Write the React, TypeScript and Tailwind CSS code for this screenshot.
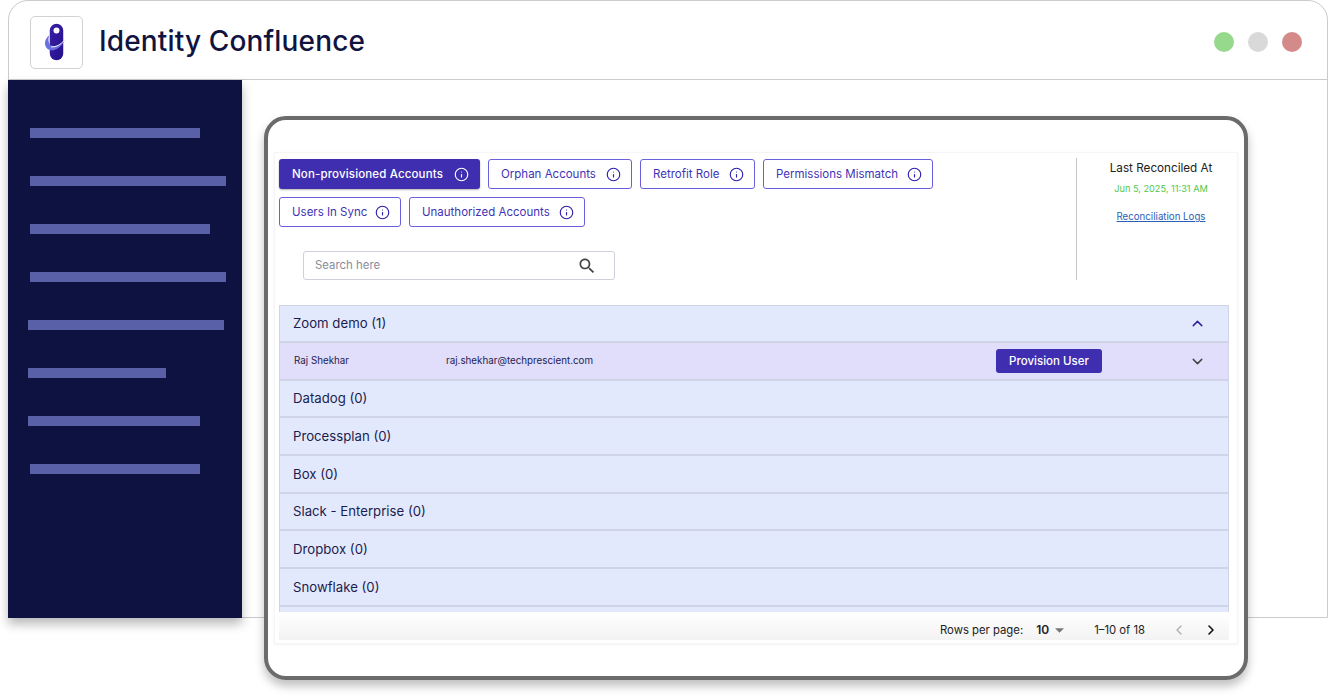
import { ChevronUp, ChevronDown, ChevronLeft, ChevronRight, Info } from "lucide-react";

const bars = [
  "ml-[22px] w-[170px]",
  "ml-[22px] w-[196px]",
  "ml-[22px] w-[180px]",
  "ml-[22px] w-[196px]",
  "ml-[20px] w-[196px]",
  "ml-[20px] w-[138px]",
  "ml-[20px] w-[172px]",
  "ml-[22px] w-[170px]",
];

function Logo() {
  return (
    <div className="w-[53px] h-[53px] rounded-[5px] border border-[#d2d2d2] bg-white shrink-0">
      <svg viewBox="0 0 53 53" className="w-full h-full">
        <defs>
          <linearGradient id="cap" x1="0" y1="0" x2="1" y2="1">
            <stop offset="0" stopColor="#3a1fa8" />
            <stop offset="1" stopColor="#24108a" />
          </linearGradient>
        </defs>
        <rect x="19.5" y="7" width="14" height="38" rx="7" fill="url(#cap)" />
        <circle cx="26.5" cy="14" r="3.1" fill="#fff" />
        <path d="M19 19 C14 23 13 29 17 33 C22 37 31 33 35.5 23 C32 29 25 31.5 21 29.5 C18 28 17.5 23 19 19Z" fill="#6a6fe0" />
        <path d="M21 31 C26 31.5 31 28.5 34.5 24.5" stroke="#fff" strokeWidth="1" fill="none" />
      </svg>
    </div>
  );
}

function Tab({ label, width, active }: { label: string; width: string; active?: boolean }) {
  return (
    <div
      className={
        active
          ? `h-[30px] flex items-center pl-[13px] pr-[11px] rounded-[3px] bg-[#3f2eb0] text-white text-[11.5px] font-medium tracking-[0.15px] shadow-[0_1px_2px_rgba(0,0,0,0.3)] ${width}`
          : `h-[30px] flex items-center pl-[12px] pr-[10px] rounded-[3px] border border-[#6a60dc] bg-white text-[#3f33b5] text-[11.5px] ${width}`
      }
    >
      <span className="whitespace-nowrap pt-px">{label}</span>
      <Info size={15} strokeWidth={1.8} className={active ? "ml-auto text-white" : "ml-auto text-[#2d1fb0]"} />
    </div>
  );
}

function Row({ label }: { label: string }) {
  return (
    <div className="h-[37.7px] shrink-0 flex items-center pl-[13px] pt-px bg-[#e3e9fd] border-b-2 border-[#cfd4e6] text-[#1a1d4e] text-[13.2px]">
      {label}
    </div>
  );
}

export default function App() {
  return (
    <div className="w-[1328px] h-[696px] overflow-hidden bg-white font-['Inter',sans-serif]">
      <div className="ml-[8px] w-[1320px] h-[618px] rounded-t-[20px] border border-[#cbcbcb] bg-white flex flex-col">
        <header className="h-[79px] shrink-0 flex items-center border-b border-[#cbcbcb] pl-[21px] pr-[25px] pt-[4px]">
          <Logo />
          <h1 className="ml-[16px] -mt-[2px] text-[28px] font-medium text-[#10143f] tracking-[0.15px] whitespace-nowrap">Identity Confluence</h1>
          <div className="ml-auto flex gap-[14px]">
            <span className="w-[20px] h-[20px] rounded-full bg-[#97d98c]" />
            <span className="w-[20px] h-[20px] rounded-full bg-[#d9d9d9]" />
            <span className="w-[20px] h-[20px] rounded-full bg-[#d58a8a]" />
          </div>
        </header>
        <div className="flex h-[538px] -ml-px">
          <aside className="w-[234px] h-[538px] shrink-0 bg-[#0e1240] pt-[48px] flex flex-col gap-[38px] shadow-[0_6px_10px_rgba(0,0,0,0.28)]">
            {bars.map((b, i) => (
              <div key={i} className={`h-[10px] bg-[#5a60a8] ${b}`} />
            ))}
          </aside>
          <main className="ml-[22px] mt-[36px] w-[984px] h-[564px] shrink-0 rounded-[22px] border-[4px] border-[#6b6b6b] bg-white shadow-[0_6px_10px_rgba(0,0,0,0.25)] pt-[32px] px-[6px] overflow-hidden">
            <div className="border border-[#f5f5f5] pt-[6px] pl-[4px] pr-[8px] h-[492px] flex flex-col shadow-[0_1px_3px_rgba(0,0,0,0.05)]">
              <div className="h-[146px] shrink-0 flex">
                <div className="w-[797px] shrink-0">
                  <div className="flex flex-wrap gap-[8px] w-[700px]">
                    <Tab label="Non-provisioned Accounts" width="w-[201px]" active />
                    <Tab label="Orphan Accounts" width="w-[144px]" />
                    <Tab label="Retrofit Role" width="w-[115px]" />
                    <Tab label="Permissions Mismatch" width="w-[170px]" />
                    <Tab label="Users In Sync" width="w-[122px]" />
                    <Tab label="Unauthorized Accounts" width="w-[176px]" />
                  </div>
                  <div className="mt-[24px] ml-[24px] w-[312px] h-[29px] rounded-[3px] border border-[#cfd0dc] flex items-center pl-[11px] pr-[17px] text-[11.4px] text-[#8a8c9c]">
                    <span className="pt-px">Search here</span>
                    <svg viewBox="0 0 24 24" className="ml-auto w-[20px] h-[20px]">
                      <path fill="#444" d="M15.5 14h-.79l-.28-.27C15.41 12.59 16 11.11 16 9.5 16 5.91 13.09 3 9.5 3S3 5.91 3 9.5 5.91 16 9.5 16c1.61 0 3.09-.59 4.23-1.57l.27.28v.79l5 4.99L20.49 19l-4.99-5zm-6 0C7.01 14 5 11.99 5 9.5S7.01 5 9.5 5 14 7.01 14 9.5 11.99 14 9.5 14z" />
                    </svg>
                  </div>
                </div>
                <div className="w-[153px] h-[122px] shrink-0 border-l border-[#c6c6c6] flex flex-col items-center -mt-px pl-[16px]">
                  <div className="text-[11.7px] text-[#222] mt-[2px] whitespace-nowrap">Last Reconciled At</div>
                  <div className="text-[9.2px] text-[#4fc84a] mt-[4px] whitespace-nowrap">Jun 5, 2025, 11:31 AM</div>
                  <div className="text-[9.7px] text-[#2a5fb5] underline mt-[15px] whitespace-nowrap">Reconciliation Logs</div>
                </div>
              </div>
              <div className="h-[307px] shrink-0 flex flex-col overflow-hidden border-t border-x border-[#cfd4e6]">
                <div className="h-[37px] shrink-0 flex items-center pl-[13px] pr-[22px] bg-[#e3e9fd] border-b-2 border-[#cfd4e6] text-[#1a1d4e] text-[13.2px]">
                  <span>Zoom demo (1)</span>
                  <ChevronUp size={17} strokeWidth={2} className="ml-auto text-[#2d1fa0]" />
                </div>
                <div className="h-[37.7px] shrink-0 flex items-center pl-[14px] pr-[22px] pt-px bg-[#e0defa] border-b-2 border-[#cfd4e6] text-[#1e2150] text-[9.8px]">
                  <span className="w-[152px]">Raj Shekhar</span>
                  <span>raj.shekhar@techprescient.com</span>
                  <span className="ml-auto mr-[87px] w-[106px] h-[24px] rounded-[3px] bg-[#3f2eb0] text-white text-[11.5px] font-medium flex items-center justify-center">Provision User</span>
                  <ChevronDown size={17} strokeWidth={2} className="text-[#444]" />
                </div>
                <Row label="Datadog (0)" />
                <Row label="Processplan (0)" />
                <Row label="Box (0)" />
                <Row label="Slack - Enterprise (0)" />
                <Row label="Dropbox (0)" />
                <Row label="Snowflake (0)" />
                <Row label="" />
              </div>
              <div className="h-[28px] shrink-0 flex items-center justify-end pt-[8px] pr-[10px] bg-gradient-to-b from-white to-[#f3f3f3] text-[11.3px] text-[#222]">
                <span>Rows per page:</span>
                <span className="ml-[13px] font-semibold text-[12px]">10</span>
                <svg viewBox="0 0 10 5" className="ml-[6px] w-[9px] h-[5px]"><path d="M0 0h10L5 5z" fill="#777" /></svg>
                <span className="ml-[30px]">1–10 of 18</span>
                <ChevronLeft size={16} strokeWidth={1.8} className="ml-[26px] text-[#aaa]" />
                <ChevronRight size={16} strokeWidth={2.4} className="ml-[16px] text-[#111]" />
              </div>
            </div>
          </main>
        </div>
      </div>
    </div>
  );
}
